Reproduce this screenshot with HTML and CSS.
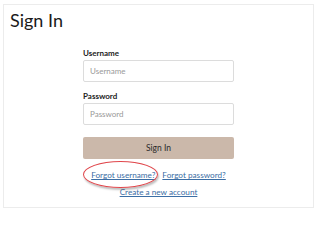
FILE: index.html
```html
<!DOCTYPE html>
<html lang="en">
<head>
<meta charset="utf-8">
<title>Sign In</title>
<link rel="stylesheet" href="styles.css">
</head>
<body>
<div class="card">
  <h1 class="title">Sign In</h1>
  <form class="form">
    <label class="label" for="u">Username</label>
    <input class="input" id="u" type="text" placeholder="Username">
    <label class="label" for="p">Password</label>
    <input class="input" id="p" type="password" placeholder="Password">
    <button class="btn" type="button">Sign In</button>
    <div class="links">
      <a class="link link-user" href="#">Forgot username?</a>
      <a class="link" href="#">Forgot password?</a>
    </div>
    <div class="links links-2">
      <a class="link" href="#">Create a new account</a>
    </div>
  </form>
</div>
</body>
</html>
```
FILE: styles.css
```css
html, body {
  margin: 0;
  padding: 0;
  background: #fff;
}
body {
  width: 319px;
  height: 213px;
  overflow: hidden;
  font-family: Lato, "Open Sans", sans-serif;
  color: #222;
}
.card {
  margin: 4px 0 0 3px;
  width: 309px;
  height: 202px;
  border: 1px solid #ececec;
  box-sizing: content-box;
}
.title {
  margin: 4px 0 0 6px;
  font-size: 18px;
  font-weight: 400;
  line-height: 22px;
  color: #1a1a1a;
}
.form {
  width: 151px;
  margin: 17px auto 0;
  display: flex;
  flex-direction: column;
}
.label {
  font-size: 8px;
  font-weight: 700;
  color: #222;
  line-height: 10px;
  margin-bottom: 2px;
}
.input {
  box-sizing: border-box;
  height: 22px;
  width: 151px;
  border: 1px solid #dcdcdc;
  border-radius: 2px;
  padding: 0 6px;
  font-family: inherit;
  font-size: 8px;
  color: #333;
  margin: 0 0 9px;
}
.input::placeholder {
  color: #999;
}
.btn {
  margin-top: 3px;
  height: 22px;
  width: 151px;
  border: none;
  border-radius: 2px;
  background: #cbb8aa;
  color: #2a2a2a;
  font-family: inherit;
  font-size: 8.5px;
  padding: 0;
}
.links {
  display: flex;
  justify-content: center;
  gap: 7px;
  margin-top: 11px;
  line-height: 10px;
}
.links-2 {
  margin-top: 7px;
}
.link {
  font-size: 8.2px;
  color: #3b6ea5;
  text-decoration: underline;
  font-family: Lato, "Open Sans", sans-serif;
}
.link-user {
  position: relative;
}
.link-user::after {
  content: "";
  position: absolute;
  left: -8px;
  top: -9px;
  width: 75px;
  height: 27px;
  border: 1.8px solid #e0474c;
  border-radius: 50%;
  box-shadow: 1px 2px 2px rgba(0,0,0,0.25);
  box-sizing: border-box;
}
```
